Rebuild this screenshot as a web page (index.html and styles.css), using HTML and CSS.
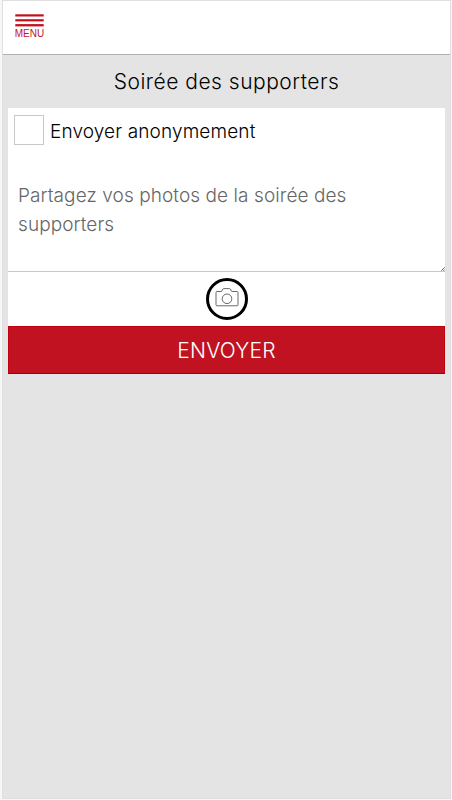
FILE: index.html
```html
<!DOCTYPE html>
<html lang="fr">
<head>
  <meta charset="UTF-8">
  <meta name="viewport" content="width=device-width, initial-scale=1.0">
  <title>Soirée des supporters</title>
  <link rel="stylesheet" href="styles.css">
</head>
<body>

<div class="app">
  <header class="topbar">
    <a class="menu" href="#">
      <svg class="menu-icon" width="29" height="13" viewBox="0 0 29 13" fill="#c4101c">
        <rect x="0.3" y="0.3" width="28.4" height="2.2"/>
        <rect x="0.3" y="5.2" width="28.4" height="2.2"/>
        <rect x="0.3" y="10.1" width="28.4" height="2.3"/>
      </svg>
      <span class="menu-label">MENU</span>
    </a>
  </header>

  <h1 class="title">Soirée des supporters</h1>

  <form class="share-form">
    <label class="anonymous">
      <input type="checkbox" class="checkbox">
      <span class="anonymous-label">Envoyer anonymement</span>
    </label>
    <div class="message-box">
      <textarea class="message" placeholder="Partagez vos photos de la soirée des supporters"></textarea>
      <svg class="grip" width="4" height="4" viewBox="0 0 4 4" stroke="#555" stroke-width="0.9">
        <path d="M0.3 3.7L3.7 0.3M2.4 3.9L3.9 2.4"/>
      </svg>
    </div>
    <div class="photo-row">
      <button type="button" class="photo-button" aria-label="Photo">
        <svg width="24" height="19" viewBox="0 0 24 19" fill="none" stroke="#444" stroke-width="0.8">
          <path d="M2 3.5H6.2C7.4 3.5 7.2 0.6 8.6 0.6H14.6C16 0.6 15.8 3.5 17 3.5H22Q23 3.5 23 4.5V16.8Q23 17.8 22 17.8H2Q1 17.8 1 16.8V4.5Q1 3.5 2 3.5Z"/>
          <circle cx="12" cy="10.8" r="4.8"/>
        </svg>
      </button>
    </div>
    <button type="button" class="send">ENVOYER</button>
  </form>
</div>

</body>
</html>
```

FILE: styles.css
```css
* {
  box-sizing: border-box;
}

body {
  margin: 0;
  background: #f7f7f7;
  font-family: Inter, "Liberation Sans", sans-serif;
  font-weight: 300;
  color: #000;
}

.app {
  height: 799px;
  margin: 0 1px 0 2px;
  border: 1px solid #dfdfdf;
  background: #e4e4e4;
}

/* Top bar */
.topbar {
  height: 54px;
  padding: 13px 12px 0 11px;
  background: #fff;
  border-bottom: 1px solid #b0b0b0;
}

.menu {
  display: flex;
  flex-direction: column;
  align-items: center;
  width: 31px;
  color: #c1121f;
  text-decoration: none;
}

.menu-icon {
  display: block;
}

.menu-label {
  font-family: "Liberation Sans", sans-serif;
  font-size: 10px;
  line-height: 13px;
}

.title {
  margin: 0;
  height: 53px;
  font-size: 21px;
  font-weight: 300;
  line-height: 54px;
  letter-spacing: 0.5px;
  text-align: center;
}

/* Form */
.share-form {
  margin: 0 5px;
  background: #fff;
}

.anonymous {
  display: flex;
  align-items: center;
  gap: 6px;
  padding: 7px 6px 0;
  font-size: 19px;
  line-height: 30px;
  letter-spacing: 0.13px;
}

.anonymous-label {
  padding-top: 3px;
  line-height: 27px;
}

.checkbox {
  appearance: none;
  width: 30px;
  height: 30px;
  margin: 0;
  border: 1px solid #c8c8c8;
  background: #fff;
}

.message-box {
  position: relative;
  margin-top: 27px;
}

.message {
  display: block;
  width: 100%;
  height: 100px;
  padding: 9px 10px;
  border: 0;
  border-bottom: 1px solid #c8c8c8;
  outline: none;
  resize: none;
  font-family: inherit;
  font-size: 19px;
  font-weight: 300;
  line-height: 29px;
  letter-spacing: 0.08px;
}

.message::placeholder {
  color: #666;
}

/* Resize grip in the corner of the message */
.grip {
  position: absolute;
  right: 0;
  bottom: 1px;
}

.photo-row {
  display: flex;
  justify-content: center;
  height: 54px;
  padding-top: 6px;
}

.photo-button {
  display: flex;
  align-items: center;
  justify-content: center;
  width: 42px;
  height: 42px;
  padding: 0 0 3px;
  border: 3px solid #000;
  border-radius: 50%;
  background: #fff;
}

.send {
  display: block;
  width: 100%;
  height: 48px;
  padding: 0;
  border: 1px solid #c0000c;
  border-bottom-color: #900;
  background: #c01220;
  color: #fff;
  font-family: inherit;
  font-size: 21px;
  font-weight: 300;
  letter-spacing: 0.2px;
}
```
